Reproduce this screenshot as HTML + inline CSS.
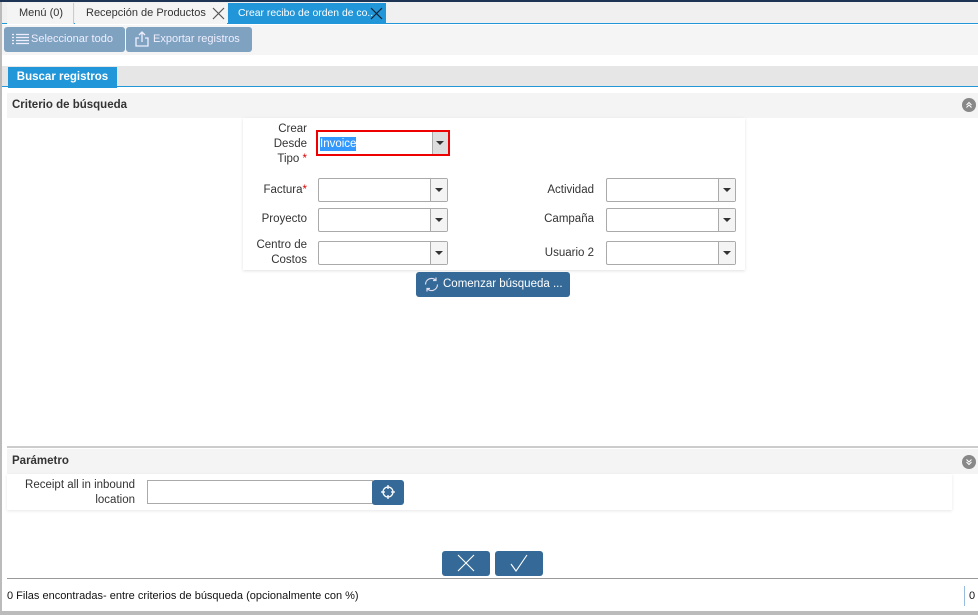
<!DOCTYPE html>
<html><head><meta charset="utf-8"><style>
*{box-sizing:border-box;margin:0;padding:0}
body{width:978px;height:615px;overflow:hidden;background:#fff;font-family:"Liberation Sans","DejaVu Sans",sans-serif;font-size:12px;color:#333;position:relative}
.a{position:absolute}
.lbl{position:absolute;text-align:right;font-size:11.5px;color:#333;line-height:15px}
.cb{position:absolute;height:24px;border:1px solid #aaa;background:#fff;border-radius:2px}
.cb:after{content:"";position:absolute;right:0;top:0;width:16px;height:22px;border-left:1px solid #aaa;background:#f4f4f4}
.cb:before{content:"";position:absolute;right:4px;top:9px;border-left:4px solid transparent;border-right:4px solid transparent;border-top:4px solid #333;z-index:2}
.btn{position:absolute;background:#356a98;border-radius:3px;color:#fff}
svg{position:absolute}
</style></head><body>
<div class="a" style="left:0;top:0;width:978px;height:2px;background:#1d3454"></div>
<div class="a" style="left:0;top:2px;width:2px;height:613px;background:#bbb"></div>
<div class="a" style="left:2px;top:2px;width:976px;height:22px;background:#f0f0f0;border-bottom:1px solid #2196d8"></div>
<div class="a" style="left:7px;top:3px;width:67px;height:21px;background:#f4f4f4;border-right:1px solid #ccc;font-size:11px;line-height:20px;padding-left:12px">Menú (0)</div>
<div class="a" style="left:75px;top:3px;width:152px;height:21px;background:#f4f4f4;font-size:11px;line-height:20px;padding-left:11px">Recepción de Productos<svg style="right:2px;top:4px" width="13" height="13" viewBox="0 0 13 13"><path d="M1 1L12 12M12 1L1 12" stroke="#555" stroke-width="1.2"/></svg></div>
<div class="a" style="left:228px;top:3px;width:158px;height:21px;background:#2196d8;color:#fff;font-size:11px;line-height:20px;padding-left:10px;white-space:nowrap"><span style="font-size:10.4px">Crear recibo de orden de co...</span><svg style="right:3px;top:4px" width="13" height="13" viewBox="0 0 13 13"><path d="M1 1L12 12M12 1L1 12" stroke="#123" stroke-width="1.2"/></svg></div>
<div class="a" style="left:2px;top:25px;width:976px;height:30px;background:#f5f5f5"></div>
<div class="a" style="left:4px;top:27px;width:121px;height:25px;background:#7fa2c0;border-radius:3px;color:#eef;font-size:11px;line-height:25px;padding-left:27px"><svg style="left:8px;top:6px" width="17" height="13" viewBox="0 0 17 13"><path d="M0 1.5h2M0 4.5h2M0 7.5h2M0 10.5h2M4 1.5h13M4 4.5h13M4 7.5h13M4 10.5h13" stroke="#eef" stroke-width="1.3"/></svg>Seleccionar todo</div>
<div class="a" style="left:126px;top:27px;width:126px;height:25px;background:#7fa2c0;border-radius:3px;color:#eef;font-size:11px;line-height:25px;padding-left:27px"><svg style="left:9px;top:4px" width="14" height="16" viewBox="0 0 14 16"><path d="M4 7H1V15H13V7H10M7 11V1M4 4L7 1L10 4" stroke="#eef" stroke-width="1.3" fill="none"/></svg>Exportar registros</div>
<div class="a" style="left:2px;top:66px;width:976px;height:21px;background:#e6e6e6;border-bottom:1px solid #2196d8"></div>
<div class="a" style="left:8px;top:67px;width:109px;height:21px;background:#2196d8;color:#fff;font-weight:bold;font-size:11.5px;line-height:21px;text-align:center">Buscar registros</div>
<div class="a" style="left:7px;top:93px;width:971px;height:25px;background:#f4f4f4;font-weight:bold;font-size:11.5px;line-height:24px;padding-left:5px">Criterio de búsqueda</div>
<svg style="left:962px;top:98px" width="14" height="14" viewBox="0 0 14 14"><circle cx="7" cy="7" r="7" fill="#888"/><path d="M4.5 7L7 4.5L9.5 7M4.5 9.5L7 7L9.5 9.5" stroke="#fff" stroke-width="1" fill="none"/></svg>
<div class="a" style="left:243px;top:118px;width:502px;height:152px;background:#fff;box-shadow:0 1px 3px rgba(0,0,0,.12)"></div>
<div class="lbl" style="left:250px;top:122px;width:57px;line-height:15px">Crear<br>Desde<br>Tipo <span style="color:#d00">*</span></div>
<div class="a" style="left:316px;top:130px;width:134px;height:26px;border:2px solid #e00;background:#fff"><span style="position:absolute;left:2px;top:5px;background:#3399ff;color:#fff;font-size:11.5px;line-height:14px">Invoice</span><span style="position:absolute;right:0;top:0;width:16px;height:22px;border-left:1px solid #aaa;background:#ddd"></span><span style="position:absolute;right:4px;top:9px;border-left:4px solid transparent;border-right:4px solid transparent;border-top:4px solid #333"></span></div>
<div class="lbl" style="left:250px;top:183px;width:57px">Factura<span style="color:#d00">*</span></div>
<div class="cb" style="left:318px;top:178px;width:130px"></div>
<div class="lbl" style="left:250px;top:212px;width:57px">Proyecto</div>
<div class="cb" style="left:318px;top:208px;width:130px"></div>
<div class="lbl" style="left:245px;top:238px;width:62px">Centro de<br>Costos</div>
<div class="cb" style="left:318px;top:241px;width:130px"></div>
<div class="lbl" style="left:520px;top:183px;width:74px">Actividad</div>
<div class="cb" style="left:606px;top:178px;width:130px"></div>
<div class="lbl" style="left:520px;top:212px;width:74px">Campaña</div>
<div class="cb" style="left:606px;top:208px;width:130px"></div>
<div class="lbl" style="left:520px;top:246px;width:74px">Usuario 2</div>
<div class="cb" style="left:606px;top:241px;width:130px"></div>
<div class="btn" style="left:416px;top:272px;width:154px;height:25px;font-size:11.5px;line-height:25px;padding-left:27px"><svg style="left:7px;top:4px" width="17" height="17" viewBox="0 0 17 17"><path d="M2.5 8.5A6 6 0 0 1 13 4.5M14.5 8.5A6 6 0 0 1 4 12.5M13 1.5V4.5H10M4 15.5V12.5H7" stroke="#dde" stroke-width="1.2" fill="none"/></svg>Comenzar búsqueda ...</div>
<div class="a" style="left:7px;top:446px;width:971px;height:2px;background:#ccc"></div>
<div class="a" style="left:7px;top:449px;width:971px;height:25px;background:#f4f4f4;font-weight:bold;font-size:11.5px;line-height:24px;padding-left:5px">Parámetro</div>
<svg style="left:962px;top:455px" width="14" height="14" viewBox="0 0 14 14"><circle cx="7" cy="7" r="7" fill="#888"/><path d="M4.5 4.5L7 7L9.5 4.5M4.5 7L7 9.5L9.5 7" stroke="#fff" stroke-width="1" fill="none"/></svg>
<div class="a" style="left:7px;top:474px;width:945px;height:36px;background:#fff;box-shadow:0 1px 3px rgba(0,0,0,.1)"></div>
<div class="lbl" style="left:10px;top:478px;width:125px">Receipt all in inbound<br>location</div>
<div class="a" style="left:147px;top:480px;width:226px;height:24px;border:1px solid #aaa;background:#fff"></div>
<div class="btn" style="left:372px;top:480px;width:32px;height:25px"><svg style="left:8px;top:4px" width="16" height="16" viewBox="0 0 16 16"><circle cx="8" cy="8" r="5" stroke="#fff" stroke-width="1.3" fill="none"/><path d="M8 1V5M8 11V15M1 8H5M11 8H15" stroke="#fff" stroke-width="1.3"/></svg></div>
<div class="btn" style="left:442px;top:551px;width:48px;height:25px"><svg style="left:15px;top:3px" width="18" height="18" viewBox="0 0 18 18"><path d="M1 1L17 17M17 1L1 17" stroke="#fff" stroke-width="1.1"/></svg></div>
<div class="btn" style="left:495px;top:551px;width:48px;height:25px"><svg style="left:15px;top:3px" width="18" height="18" viewBox="0 0 18 18"><path d="M1 10L6 17L17 1" stroke="#fff" stroke-width="1.1" fill="none"/></svg></div>
<div class="a" style="left:7px;top:578px;width:971px;height:1px;background:#999"></div>
<div class="a" style="left:7px;top:589px;font-size:11px;line-height:14px;color:#111">0 Filas encontradas- entre criterios de búsqueda (opcionalmente con %)</div>
<div class="a" style="left:964px;top:586px;width:1px;height:20px;background:#9bd"></div>
<div class="a" style="left:969px;top:589px;font-size:11px;line-height:14px;color:#111">0</div>
<div class="a" style="left:0;top:611px;width:978px;height:4px;background:#bbb"></div>
</body></html>
